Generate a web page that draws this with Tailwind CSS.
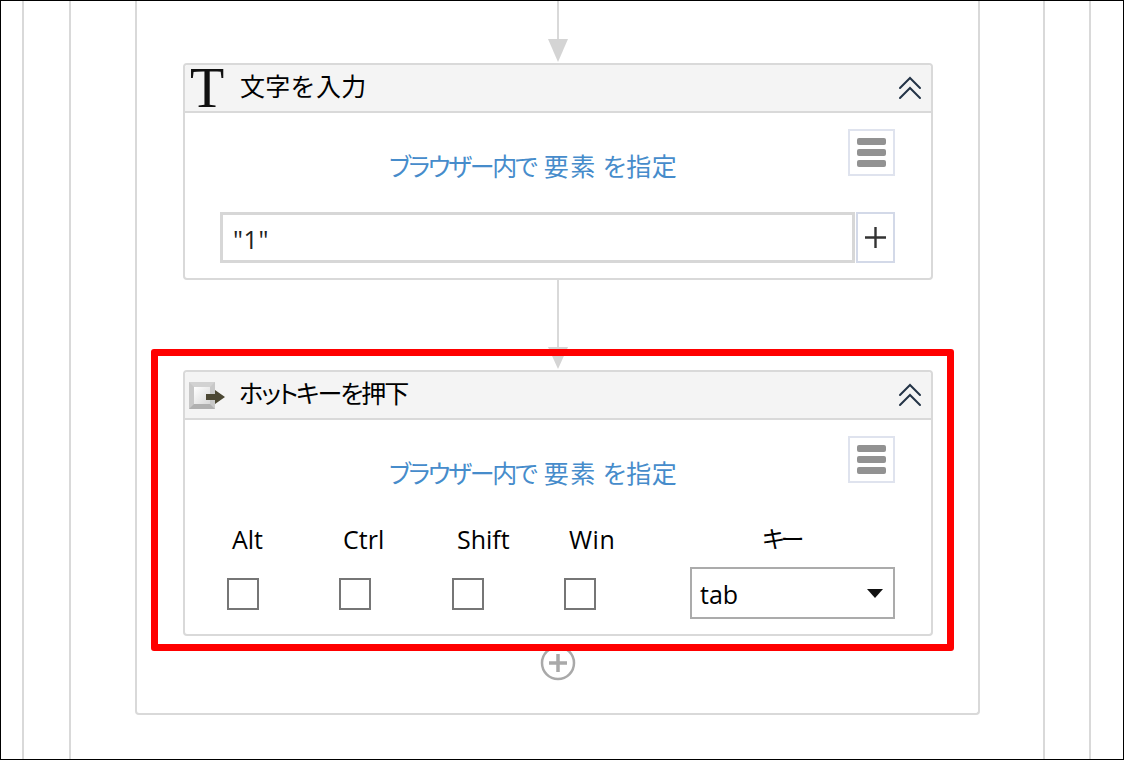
<!doctype html>
<html lang="ja">
<head>
<meta charset="utf-8">
<script src="https://cdn.jsdelivr.net/npm/@tailwindcss/browser@4"></script>
</head>
<body class="bg-white">
<div class="relative w-[1124px] h-[760px] overflow-hidden border border-black bg-white text-black font-['Noto_Sans_CJK_JP','Noto_Sans',sans-serif]">
  <div class="h-full ml-[21px] w-[1069px] border-x-2 border-[#d9d9d9] pl-[45px] pr-[44px]">
    <div class="h-full border-x-2 border-[#d9d9d9] pl-[64px] pr-[63px]">
      <div class="h-[714px] border-x-2 border-b-2 border-[#d9d9d9] rounded-b-[4px] flex flex-col items-center">
        <div class="w-[2px] h-[38px] bg-[#d9d9d9]"></div>
        <svg class="w-[20px] h-[24px] block shrink-0" viewBox="0 0 20 24"><path d="M0 0H20L10 23Z" fill="#d4d4d4"/></svg>

        <section class="w-[750px] ml-[1px] h-[217px] shrink-0 border-2 border-[#d9d9d9] rounded-[4px] bg-white flex flex-col">
          <header class="h-[48px] shrink-0 bg-[#f4f4f4] border-b-2 border-[#d9d9d9] flex items-center rounded-t-[3px]">
            <span class="w-[55px] pl-[5px] shrink-0 text-[56px] leading-[46px] h-[46px] font-['Liberation_Serif',serif] text-[#111]">T</span>
            <span class="text-[25px] leading-none tracking-[0.3px] -mt-[6px]">文字を入力</span>
            <svg class="ml-auto mr-[9px] w-[24px] h-[24px]" viewBox="0 0 24 24" fill="none" stroke="#243447" stroke-width="2" stroke-linecap="round"><path d="M2 12L12 2L22 12M2 22L12 12L22 22"/></svg>
          </header>
          <div class="relative flex-1">
            <p class="absolute left-[204px] top-[37px] flex whitespace-nowrap text-[25px] leading-[30px] text-[#468ccb] [font-feature-settings:'palt']">
              <span class="tracking-[-2.300px] mr-[8px]">ブラウザー内で</span><span class="tracking-[1.500px] mr-[6px]">要素</span><span class="tracking-[0.500px]">を指定</span>
            </p>
            <div class="absolute left-[663px] top-[16px] w-[47px] h-[47px] border-2 border-[#dfe3ee] flex flex-col items-center justify-center gap-[4px]">
              <span class="block w-[29px] h-[7px] rounded-[2px] bg-[#929292]"></span>
              <span class="block w-[29px] h-[7px] rounded-[2px] bg-[#929292]"></span>
              <span class="block w-[29px] h-[7px] rounded-[2px] bg-[#929292]"></span>
            </div>
            <div class="absolute left-[35px] top-[99px] w-[675px] flex">
              <div class="w-[635px] h-[51px] border-[3px] border-[#d7d7d7] flex items-center pl-[10px] pt-[4px] text-[25px] leading-none font-['Open_Sans',sans-serif] text-[#222] tracking-[0.6px]">"1"</div>
              <div class="w-[39px] ml-[1px] h-[51px] border-2 border-[#d3d9e8] flex items-center justify-center">
                <svg class="w-[21px] h-[21px]" viewBox="0 0 21 21" stroke="#333" stroke-width="2.400"><path d="M0 10.500H21M10.500 0V21"/></svg>
              </div>
            </div>
          </div>
        </section>

        <div class="w-[2px] h-[67px] bg-[#d9d9d9] shrink-0"></div>
        <svg class="w-[20px] h-[23px] block shrink-0" viewBox="0 0 20 23"><path d="M0 0H20L10 22Z" fill="#d4d4d4"/></svg>

        <section class="w-[750px] ml-[1px] h-[266px] shrink-0 border-2 border-[#d9d9d9] rounded-[4px] bg-white flex flex-col">
          <header class="h-[48px] shrink-0 bg-[#f4f4f4] border-b-2 border-[#d9d9d9] flex items-center rounded-t-[3px]">
            <svg class="ml-[4px] mr-[14px] w-[36px] h-[27px] shrink-0" viewBox="0 0 36 27">
              <defs><linearGradient id="g" x1="0" y1="0" x2="1" y2="1"><stop offset="0" stop-color="#ffffff"/><stop offset="1" stop-color="#d8d8d8"/></linearGradient></defs>
              <rect width="26" height="27" fill="#c8c8c8"/>
              <path d="M0 0H26L21 5H5Z" fill="#d2d2d2"/>
              <path d="M0 27H26L21 22H5Z" fill="#b0b0b0"/>
              <rect x="5" y="5" width="16" height="17" fill="url(#g)"/>
              <path d="M17 12H26V8L36 15L26 22V18H17Z" fill="#4b4733"/>
            </svg>
            <span class="text-[25px] leading-none tracking-[-2px] -mt-[5px] [font-feature-settings:'palt']">ホットキーを押下</span>
            <svg class="ml-auto mr-[9px] w-[24px] h-[24px]" viewBox="0 0 24 24" fill="none" stroke="#243447" stroke-width="2" stroke-linecap="round"><path d="M2 12L12 2L22 12M2 22L12 12L22 22"/></svg>
          </header>
          <div class="relative flex-1">
            <p class="absolute left-[204px] top-[37px] flex whitespace-nowrap text-[25px] leading-[30px] text-[#468ccb] [font-feature-settings:'palt']">
              <span class="tracking-[-2.300px] mr-[8px]">ブラウザー内で</span><span class="tracking-[1.500px] mr-[6px]">要素</span><span class="tracking-[0.500px]">を指定</span>
            </p>
            <div class="absolute left-[663px] top-[16px] w-[47px] h-[47px] border-2 border-[#dfe3ee] flex flex-col items-center justify-center gap-[4px]">
              <span class="block w-[29px] h-[7px] rounded-[2px] bg-[#929292]"></span>
              <span class="block w-[29px] h-[7px] rounded-[2px] bg-[#929292]"></span>
              <span class="block w-[29px] h-[7px] rounded-[2px] bg-[#929292]"></span>
            </div>
            <div class="absolute left-[42px] top-[101px] flex text-[25px] leading-[36px] font-['Open_Sans',sans-serif]">
              <div class="w-[112px] flex flex-col"><span class="pl-[5px]">Alt</span><span class="block mt-[21px] w-[32px] h-[32px] border-2 border-[#767676] bg-white"></span></div>
              <div class="w-[113px] flex flex-col"><span class="pl-[4px]">Ctrl</span><span class="block mt-[21px] w-[32px] h-[32px] border-2 border-[#767676] bg-white"></span></div>
              <div class="w-[112px] flex flex-col"><span class="pl-[5px]">Shift</span><span class="block mt-[21px] w-[32px] h-[32px] border-2 border-[#767676] bg-white"></span></div>
              <div class="w-[126px] flex flex-col"><span class="pl-[5px] tracking-[0.5px]">Win</span><span class="block mt-[21px] w-[32px] h-[32px] border-2 border-[#767676] bg-white"></span></div>
              <div class="w-[205px] flex flex-col items-stretch">
                <span class="text-center text-[24px] font-['Noto_Sans_CJK_JP',sans-serif] tracking-[-5px] pr-[24px] -mt-[1px]">キー</span>
                <div class="mt-[11px] h-[52px] border-[2px] border-[#ababab] flex items-center pl-[8px] pr-[10px]">
                  <span class="text-[25px] leading-none pt-[2px]">tab</span>
                  <svg class="ml-auto w-[16px] h-[9px]" viewBox="0 0 16 9"><path d="M0 0H16L8 9Z" fill="#111"/></svg>
                </div>
              </div>
            </div>
          </div>
        </section>

        <svg class="w-[36px] h-[36px] mt-[9px] ml-[1px] block shrink-0" viewBox="0 0 36 36" fill="none" stroke="#a9a9a9"><circle cx="18" cy="18" r="16" stroke-width="2.500"/><path d="M9 18H27M18 9V27" stroke-width="3.500"/></svg>
      </div>
    </div>
  </div>
  <div class="absolute left-[150px] top-[348px] w-[803px] h-[302px] border-[7px] border-[#ff0000] rounded-[3px]"></div>
</div>
</body>
</html>
